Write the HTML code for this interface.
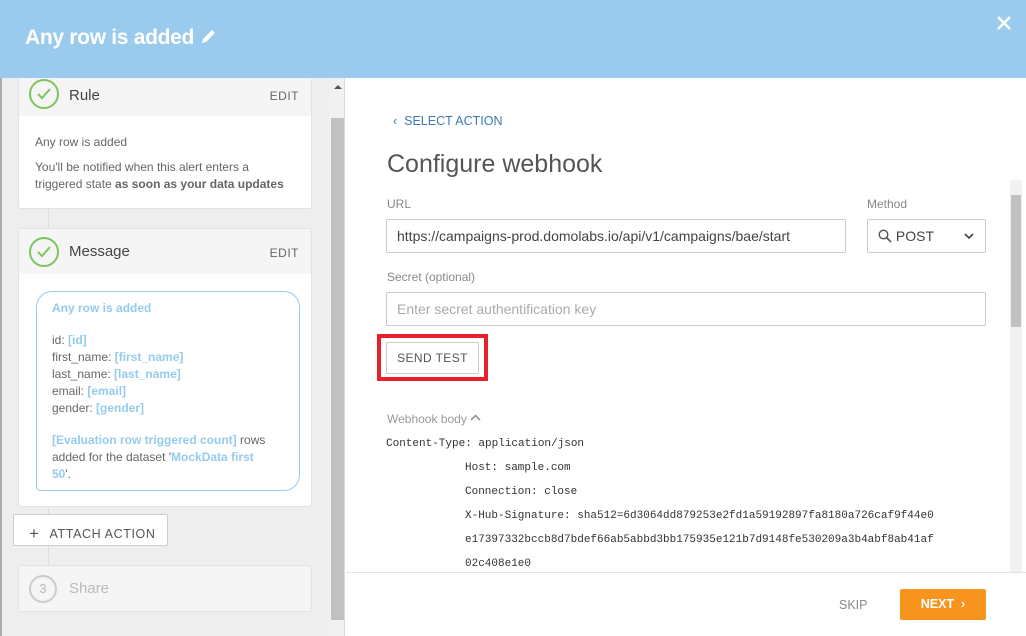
<!DOCTYPE html>
<html><head><meta charset="utf-8"><style>
*{box-sizing:border-box;margin:0;padding:0}
body{width:1026px;height:636px;overflow:hidden;font-family:"Liberation Sans",sans-serif;background:#fff;position:relative;color:#555}
.hdr{position:absolute;left:0;top:0;width:1026px;height:78px;background:#9acbee}
.hdr h1{position:absolute;left:25px;top:26px;font-size:21px;color:#fff;font-weight:bold;letter-spacing:-0.3px}
.left{position:absolute;left:0;top:78px;width:345px;height:558px;background:#eeeeee;border-left:2px solid #aaa;border-right:1px solid #ddd;overflow:hidden}
.sb{position:absolute;left:327px;top:0;width:17px;height:558px;background:#f1f1f1}
.thumb{position:absolute;left:2px;top:40px;width:13px;height:502px;background:#c1c1c1}
.card{position:absolute;left:16px;width:294px;background:#fff;border:1px solid #e2e2e2;border-radius:3px}
.ch{height:38px;background:#f5f5f5;position:relative}
.ck{position:absolute;left:10px;top:2px;width:30px;height:30px;border:2px solid #7cc45c;border-radius:50%}
.ch .t{position:absolute;left:50px;top:9px;font-size:15px;color:#444}
.ch .e{position:absolute;right:12px;top:11px;font-size:12px;color:#666;letter-spacing:.5px}
.sm{font-size:12px;color:#666;line-height:17px}
.b{color:#94cbee;font-weight:bold}
.line{position:absolute;left:46px;width:1px;background:#ddd}
.right{position:absolute;left:346px;top:78px;width:680px;height:558px;background:#fff}
.lbl{position:absolute;font-size:12px;color:#888}
.inp{position:absolute;height:34px;border:1px solid #ccc;border-radius:2px;font-size:14px;color:#444;padding:8px 10px}
.mono{font-family:"Liberation Mono",monospace;font-size:11px;color:#333;position:absolute;white-space:pre}
.gap{height:15px}
</style></head><body>
<div class="hdr"><h1>Any row is added <svg width="17" height="17" viewBox="0 0 17 17" style="vertical-align:-1px"><path d="M2 15 L3 11 L12 2 L15 5 L6 14 Z" fill="#fff"/></svg></h1>
<svg style="position:absolute;left:996px;top:15px" width="16" height="16"><path d="M2 2L14 14M14 2L2 14" stroke="#fff" stroke-width="2.5"/></svg></div>
<div class="left">
 <div class="line" style="top:130px;height:20px"></div>
 <div class="line" style="top:430px;height:57px"></div>
 <div class="card" style="top:0;height:131px;border-top:none">
  <div class="ch"><div class="ck" style="top:1px"><svg width="26" height="26"><path d="M7 13l4 4 8-9" fill="none" stroke="#7cc45c" stroke-width="2"/></svg></div><div class="t">Rule</div><div class="e">EDIT</div></div>
  <div class="sm" style="padding:18px 16px 0">Any row is added</div>
  <div class="sm" style="padding:8px 16px 0">You'll be notified when this alert enters a triggered state <b>as soon as your data updates</b></div>
 </div>
 <div class="card" style="top:150px;height:279px">
  <div class="ch" style="height:45px"><div class="ck" style="top:8px"><svg width="26" height="26"><path d="M7 13l4 4 8-9" fill="none" stroke="#7cc45c" stroke-width="2"/></svg></div><div class="t" style="top:14px">Message</div><div class="e" style="top:17px">EDIT</div></div>
  <div style="position:absolute;left:17px;top:62px;width:264px;height:200px;border:1px solid #9acbee;border-radius:16px 16px 16px 4px;padding:8px 28px 9px 15px" class="sm">
   <div class="b">Any row is added</div><div class="gap"></div>
   <div>id: <span class="b">[id]</span></div>
   <div>first_name: <span class="b">[first_name]</span></div>
   <div>last_name: <span class="b">[last_name]</span></div>
   <div>email: <span class="b">[email]</span></div>
   <div>gender: <span class="b">[gender]</span></div><div class="gap"></div>
   <div><span class="b">[Evaluation row triggered count]</span> rows added for the dataset '<span class="b">MockData first 50</span>'.</div>
  </div>
 </div>
 <div style="position:absolute;left:11px;top:436px;width:155px;height:32px;background:#fff;border:1px solid #ccc;border-radius:2px;font-size:12.5px;color:#555;letter-spacing:.6px;padding:8px 0 0 15px"><span style="font-size:17px;position:relative;top:1px;margin-right:10px">+</span>ATTACH ACTION</div>
 <div class="card" style="top:487px;height:47px;background:#f5f5f5">
  <div style="position:absolute;left:10px;top:9px;width:28px;height:28px;border:2px solid #ccc;border-radius:50%;font-size:13px;color:#bbb;text-align:center;line-height:24px">3</div>
  <div style="position:absolute;left:50px;top:14px;font-size:15px;color:#bbb">Share</div>
 </div>
 <div class="sb"><div class="thumb"></div><div style="position:absolute;left:5px;top:7px;border:4px solid transparent;border-bottom:4px solid #555;border-top:0"></div></div>
</div>
<div class="right">
 <div style="position:absolute;left:47px;top:36px;font-size:12.5px;color:#3b7bb5">‹&nbsp; SELECT ACTION</div>
 <div style="position:absolute;left:41px;top:72px;font-size:25px;color:#555">Configure webhook</div>
 <div class="lbl" style="left:41px;top:119px">URL</div>
 <div class="lbl" style="left:521px;top:119px">Method</div>
 <div class="inp" style="left:40px;top:141px;width:460px">https://campaigns-prod.domolabs.io/api/v1/campaigns/bae/start</div>
 <div class="inp" style="left:521px;top:141px;width:119px"><svg width="14" height="14" style="vertical-align:-2px"><circle cx="5.5" cy="5.5" r="4.3" fill="none" stroke="#555" stroke-width="1.4"/><path d="M8.5 8.5L13 13" stroke="#555" stroke-width="1.6"/></svg> POST<svg style="position:absolute;right:11px;top:13px" width="10" height="7"><path d="M1 1l4 4 4-4" fill="none" stroke="#444" stroke-width="1.6"/></svg></div>
 <div class="lbl" style="left:41px;top:192px">Secret (optional)</div>
 <div class="inp" style="left:40px;top:214px;width:600px;color:#aaa">Enter secret authentification key</div>
 <div style="position:absolute;left:31px;top:256px;width:111px;height:47px;border:4px solid #e8202a"></div>
 <div style="position:absolute;left:40px;top:264px;width:93px;height:32px;border:1px solid #ccc;border-radius:2px;font-size:12px;color:#555;text-align:center;line-height:30px;letter-spacing:.4px">SEND TEST</div>
 <div class="lbl" style="left:41px;top:334px;color:#999">Webhook body <svg width="11" height="8" style="vertical-align:1px"><path d="M1 6l4.5-4.5L10 6" fill="none" stroke="#999" stroke-width="1.6"/></svg></div>
 <div class="mono" style="left:40px;top:360px">Content-Type: application/json</div>
 <div class="mono" style="left:119px;top:384px">Host: sample.com</div>
 <div class="mono" style="left:119px;top:408px">Connection: close</div>
 <div class="mono" style="left:119px;top:432px">X-Hub-Signature: sha512=6d3064dd879253e2fd1a59192897fa8180a726caf9f44e0</div>
 <div class="mono" style="left:119px;top:456px">e17397332bccb8d7bdef66ab5abbd3bb175935e121b7d9148fe530209a3b4abf8ab41af</div>
 <div class="mono" style="left:119px;top:480px">02c408e1e0</div>
 <div style="position:absolute;left:664px;top:102px;width:12px;height:392px;background:#f1f1f1"><div style="position:absolute;left:1px;top:15px;width:10px;height:132px;background:#c1c1c1"></div></div>
 <div style="position:absolute;left:0;top:494px;width:680px;height:1px;background:#e5e5e5"></div>
 <div style="position:absolute;left:493px;top:520px;font-size:12.5px;color:#888">SKIP</div>
 <div style="position:absolute;left:554px;top:511px;width:86px;height:31px;background:#f7941d;border-radius:2px;color:#fff;font-weight:bold;font-size:12.5px;text-align:center;line-height:31px">NEXT &nbsp;›</div>
</div>
</body></html>
